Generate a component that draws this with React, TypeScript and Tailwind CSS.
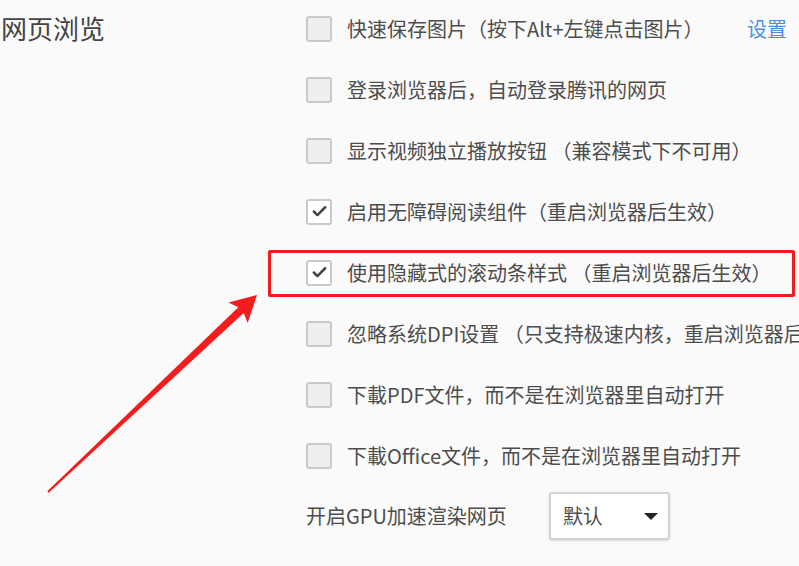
import { Check } from "lucide-react";

const rows = [
  { label: "快速保存图片（按下Alt+左键点击图片）", checked: false, link: "设置" },
  { label: "登录浏览器后，自动登录腾讯的网页", checked: false },
  { label: "显示视频独立播放按钮 （兼容模式下不可用）", checked: false },
  { label: "启用无障碍阅读组件（重启浏览器后生效）", checked: true },
  { label: "使用隐藏式的滚动条样式 （重启浏览器后生效）", checked: true, highlight: true },
  { label: "忽略系统DPI设置 （只支持极速内核，重启浏览器后生效）", checked: false },
  { label: "下載PDF文件，而不是在浏览器里自动打开", checked: false },
  { label: "下載Office文件，而不是在浏览器里自动打开", checked: false },
];

function Box({ checked }: { checked: boolean }) {
  return (
    <div
      className={`w-[26px] h-[26px] shrink-0 rounded-[3px] border-2 border-[#c9c9c9] flex items-center justify-center ${
        checked ? "bg-white" : "bg-[#efefef]"
      }`}
    >
      {checked && <Check className="w-[17px] h-[17px] text-[#444]" strokeWidth={3.5} />}
    </div>
  );
}

export default function App() {
  return (
    <div
      className="relative w-[799px] h-[566px] overflow-hidden bg-[#fafafa] text-[#4d4d4d]"
      style={{ fontFamily: '"Noto Sans CJK SC", "Noto Sans", sans-serif' }}
    >
      <div className="flex">
        {/* section title */}
        <div className="w-[306px] shrink-0 pt-[10px] pl-[1px]">
          <h2 className="text-[26px] leading-[36px] text-[#444]">网页浏览</h2>
        </div>

        {/* options */}
        <div className="flex-1 min-w-0 -mt-[2px]">
          {rows.map((row, i) => (
            <div key={i} className="relative h-[61px] flex items-center pr-[12px] whitespace-nowrap">
              {row.highlight && (
                <div className="absolute -left-[38px] right-[4px] top-[8px] h-[47px] border-[3px] border-[#f21c1c] rounded-[2px]" />
              )}
              <Box checked={row.checked} />
              <span className="ml-[15px] text-[20px] leading-none">{row.label}</span>
              {row.link && (
                <span className="ml-auto text-[20px] leading-none text-[#4a8fe6]">{row.link}</span>
              )}
            </div>
          ))}

          {/* gpu select */}
          <div className="flex items-center h-[60px] whitespace-nowrap">
            <span className="text-[20px] leading-none">开启GPU加速渲染网页</span>
            <div className="ml-[42px] w-[121px] h-[48px] bg-white border-2 border-[#d2d2d2] rounded-[3px] shadow-sm flex items-center pl-[12px] pr-[10px]">
              <span className="text-[20px] leading-none">默认</span>
              <span className="ml-auto w-0 h-0 border-l-[7px] border-r-[7px] border-t-[7px] border-l-transparent border-r-transparent border-t-[#222]" />
            </div>
          </div>
        </div>
      </div>

      {/* annotation arrow */}
      <svg className="absolute inset-0 pointer-events-none" width="799" height="566">
        <polygon
          fill="#f41d1d"
          points="48.7,492.7 243.7,313 247.7,323 257,295 228.5,302.6 238.3,307.2 47.3,491.3"
        />
      </svg>
    </div>
  );
}
